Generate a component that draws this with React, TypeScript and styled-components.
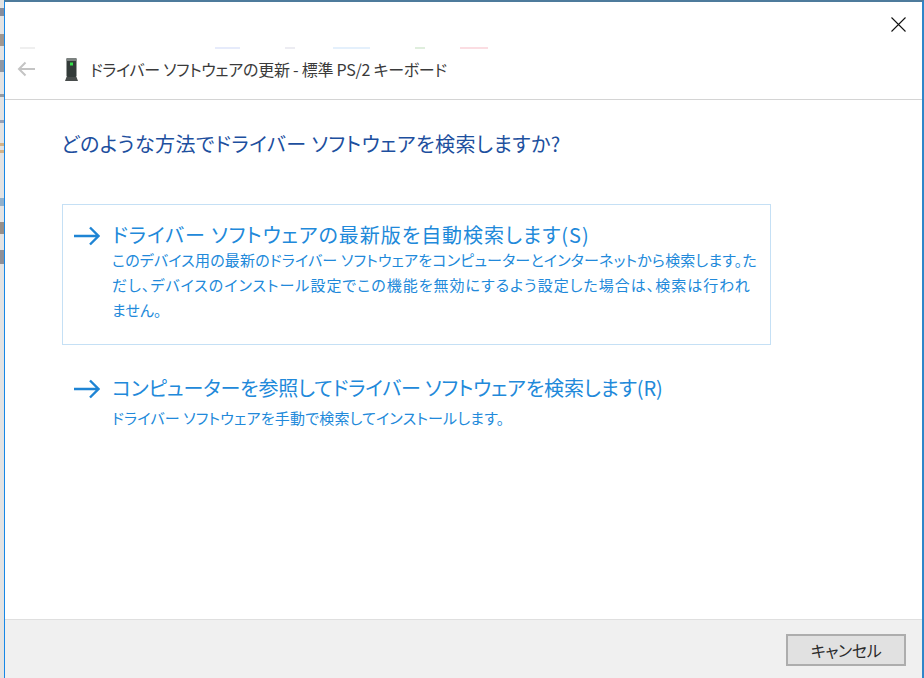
import { FC } from 'react'
import styled, { createGlobalStyle } from 'styled-components'

const GlobalStyle = createGlobalStyle`
  html, body {
    margin: 0;
    padding: 0;
    height: 100%;
    overflow: hidden;
  }
  #root {
    height: 100%;
  }
`

// slivers of the window behind the dialog
const slivers = [
  { gap: 8, height: 8, color: '#3a4560' },
  { gap: 18, height: 12, color: '#6b5a4a' },
  { gap: 14, height: 12, color: '#4a5a70' },
  { gap: 22, height: 3, color: '#556070' },
  { gap: 23, height: 3, color: '#5a6a90' },
  { gap: 20, height: 3, color: '#c98a3a' },
  { gap: 4, height: 3, color: '#c98a3a' },
  { gap: 45, height: 8, color: '#4f86b8' },
  { gap: 16, height: 12, color: '#5a4a40' },
  { gap: 16, height: 14, color: '#4a4a58' },
]

const streaks = [
  { gap: 15, width: 15, color: '#efefef' },
  { gap: 180, width: 25, color: '#e6ebfb' },
  { gap: 45, width: 10, color: '#ececf2' },
  { gap: 38, width: 37, color: '#e4f0fc' },
  { gap: 45, width: 10, color: '#dfeedd' },
  { gap: 35, width: 28, color: '#fbdde2' },
]

export default function App() {
  return (
    <>
      <GlobalStyle />
      <StRoot>
        <StBehind>
          {slivers.map((s, i) => (
            <StSliver key={i} $gap={s.gap} $height={s.height} $color={s.color} />
          ))}
        </StBehind>
        <StDialog>
          <StTitleArea>
            <StCloseRow>
              <CloseIcon />
            </StCloseRow>
            <StStreaks>
              {streaks.map((s, i) => (
                <StStreak key={i} $gap={s.gap} $width={s.width} $color={s.color} />
              ))}
            </StStreaks>
            <StHeader>
              <BackIcon />
              <DeviceIcon />
              <StHeaderText>ドライバー ソフトウェアの更新 - 標準 PS/2 キーボード</StHeaderText>
            </StHeader>
          </StTitleArea>
          <StBody>
            <StHeading>どのような方法でドライバー ソフトウェアを検索しますか?</StHeading>
            <StOption $active>
              <ArrowIcon />
              <StOptionText>
                <StOptionTitle $spacing={0.96}>ドライバー ソフトウェアの最新版を自動検索します(S)</StOptionTitle>
                <StOptionNote $gap={1}>
                  <StNoteLine $spacing={0.18}>
                    このデバイス用の最新のドライバー ソフトウェアをコンピューターとインターネットから検索します。た
                  </StNoteLine>
                  <StNoteLine $spacing={1}>
                    だし、デバイスのインストール設定でこの機能を無効にするよう設定した場合は、検索は行われ
                  </StNoteLine>
                  <StNoteLine $spacing={0}>ません。</StNoteLine>
                </StOptionNote>
              </StOptionText>
            </StOption>
            <StOption>
              <ArrowIcon />
              <StOptionText>
                <StOptionTitle $spacing={-0.15}>コンピューターを参照してドライバー ソフトウェアを検索します(R)</StOptionTitle>
                <StOptionNote $gap={6}>
                  <StNoteLine $spacing={0.2}>ドライバー ソフトウェアを手動で検索してインストールします。</StNoteLine>
                </StOptionNote>
              </StOptionText>
            </StOption>
          </StBody>
          <StFooter>
            <StCancel>キャンセル</StCancel>
          </StFooter>
        </StDialog>
      </StRoot>
    </>
  )
}

const CloseIcon: FC = () => (
  <svg width="15" height="15" viewBox="0 0 15 15" fill="none">
    <path d="M0.5 0.5L14.5 14.5M14.5 0.5L0.5 14.5" stroke="#111" strokeWidth="1.1" />
  </svg>
)

const BackIcon: FC = () => (
  <svg width="18" height="16" viewBox="0 0 18 16" fill="none">
    <path d="M18 8H2M8.5 1.5L2 8L8.5 14.5" stroke="#c4c4c4" strokeWidth="2" />
  </svg>
)

const DeviceIcon: FC = () => (
  <StDevice width="13" height="23" viewBox="0 0 13 23">
    <rect x="1.5" y="0" width="10" height="19" rx="1" fill="#333b39" />
    <rect x="1.5" y="0" width="10" height="3" rx="1" fill="#7c8280" />
    <rect x="5" y="4.5" width="3" height="3" fill="#35e04a" />
    <path d="M1.5 19H11.5L13 23H0Z" fill="#474c4b" />
  </StDevice>
)

const ArrowIcon: FC = () => (
  <StArrow width="26" height="20" viewBox="0 0 26 20" fill="none">
    <path d="M0 10H24.5M16 1.5L24.5 10L16 18.5" stroke="#1e84d4" strokeWidth="2.4" />
  </StArrow>
)

const StRoot = styled.div`
  display: flex;
  width: 924px;
  height: 678px;
  font-family: 'Noto Sans CJK JP', 'Noto Sans', sans-serif;
  font-feature-settings: 'palt';
  background: #dcdcdc;
`

const StBehind = styled.div`
  flex: 0 0 4px;
  display: flex;
  flex-direction: column;
  overflow: hidden;
  background: #e3e3e3;
`

const StSliver = styled.div<{ $gap: number; $height: number; $color: string }>`
  flex-shrink: 0;
  height: ${(p) => p.$height}px;
  margin-top: ${(p) => p.$gap}px;
  background: ${(p) => p.$color};
  opacity: 0.55;
`

const StDialog = styled.div`
  flex: 1;
  display: flex;
  flex-direction: column;
  min-width: 0;
  background: #fff;
  border-top: 2px solid #4d7b9c;
  border-left: 1px solid #1787e6;
  border-right: 2px solid #2f86c9;
`

const StTitleArea = styled.div`
  flex: 0 0 97px;
  display: flex;
  flex-direction: column;
  border-bottom: 1px solid #d4d4d4;
`

const StCloseRow = styled.div`
  display: flex;
  justify-content: flex-end;
  flex-shrink: 0;
  height: 45px;
  padding: 15px 16px 0 0;
  box-sizing: border-box;
`

const StStreaks = styled.div`
  display: flex;
  flex-shrink: 0;
  height: 2px;
`

const StStreak = styled.div<{ $gap: number; $width: number; $color: string }>`
  width: ${(p) => p.$width}px;
  margin-left: ${(p) => p.$gap}px;
  background: ${(p) => p.$color};
`

const StHeader = styled.div`
  display: flex;
  align-items: center;
  flex: 1;
  padding: 0 0 10px 12px;
`

const StDevice = styled.svg`
  flex-shrink: 0;
  margin-left: 30px;
`

const StHeaderText = styled.div`
  margin-left: 12px;
  font-size: 16px;
  letter-spacing: -0.25px;
  color: #3a3a3a;
  white-space: nowrap;
`

const StBody = styled.div`
  flex: 1;
  padding: 29px 0 0 57px;
`

const StHeading = styled.div`
  margin: 0 0 45px -1px;
  font-size: 20px;
  line-height: 30px;
  letter-spacing: 0.5px;
  color: #1d4f9e;
  white-space: nowrap;
`

const StOption = styled.div<{ $active?: boolean }>`
  display: flex;
  width: 709px;
  height: ${(p) => (p.$active ? '141px' : 'auto')};
  box-sizing: border-box;
  padding: 19px 12px 0 11px;
  margin-bottom: 12px;
  border: 1px solid ${(p) => (p.$active ? '#c5e0f5' : 'transparent')};
`

const StArrow = styled.svg`
  flex-shrink: 0;
  margin-top: 2px;
`

const StOptionText = styled.div`
  margin-left: 12px;
  min-width: 0;
`

const StOptionTitle = styled.div<{ $spacing: number }>`
  font-size: 20px;
  line-height: 22px;
  letter-spacing: ${(p) => p.$spacing}px;
  color: #2189da;
  white-space: nowrap;
`

const StOptionNote = styled.div<{ $gap: number }>`
  margin-top: ${(p) => p.$gap}px;
  font-size: 15px;
  line-height: 25px;
  color: #2189da;
`

const StNoteLine = styled.div<{ $spacing: number }>`
  letter-spacing: ${(p) => p.$spacing}px;
  white-space: nowrap;
`

const StFooter = styled.div`
  flex: 0 0 59px;
  display: flex;
  justify-content: flex-end;
  align-items: flex-start;
  box-sizing: border-box;
  padding: 14px 16px 0 0;
  background: #f0f0f0;
  border-top: 1px solid #dfdfdf;
`

const StCancel = styled.button`
  width: 120px;
  height: 32px;
  padding: 0;
  font-family: inherit;
  font-feature-settings: inherit;
  font-size: 16px;
  letter-spacing: -0.4px;
  color: #2a2a2a;
  background: #e1e1e1;
  border: 2px solid #adadad;
`
